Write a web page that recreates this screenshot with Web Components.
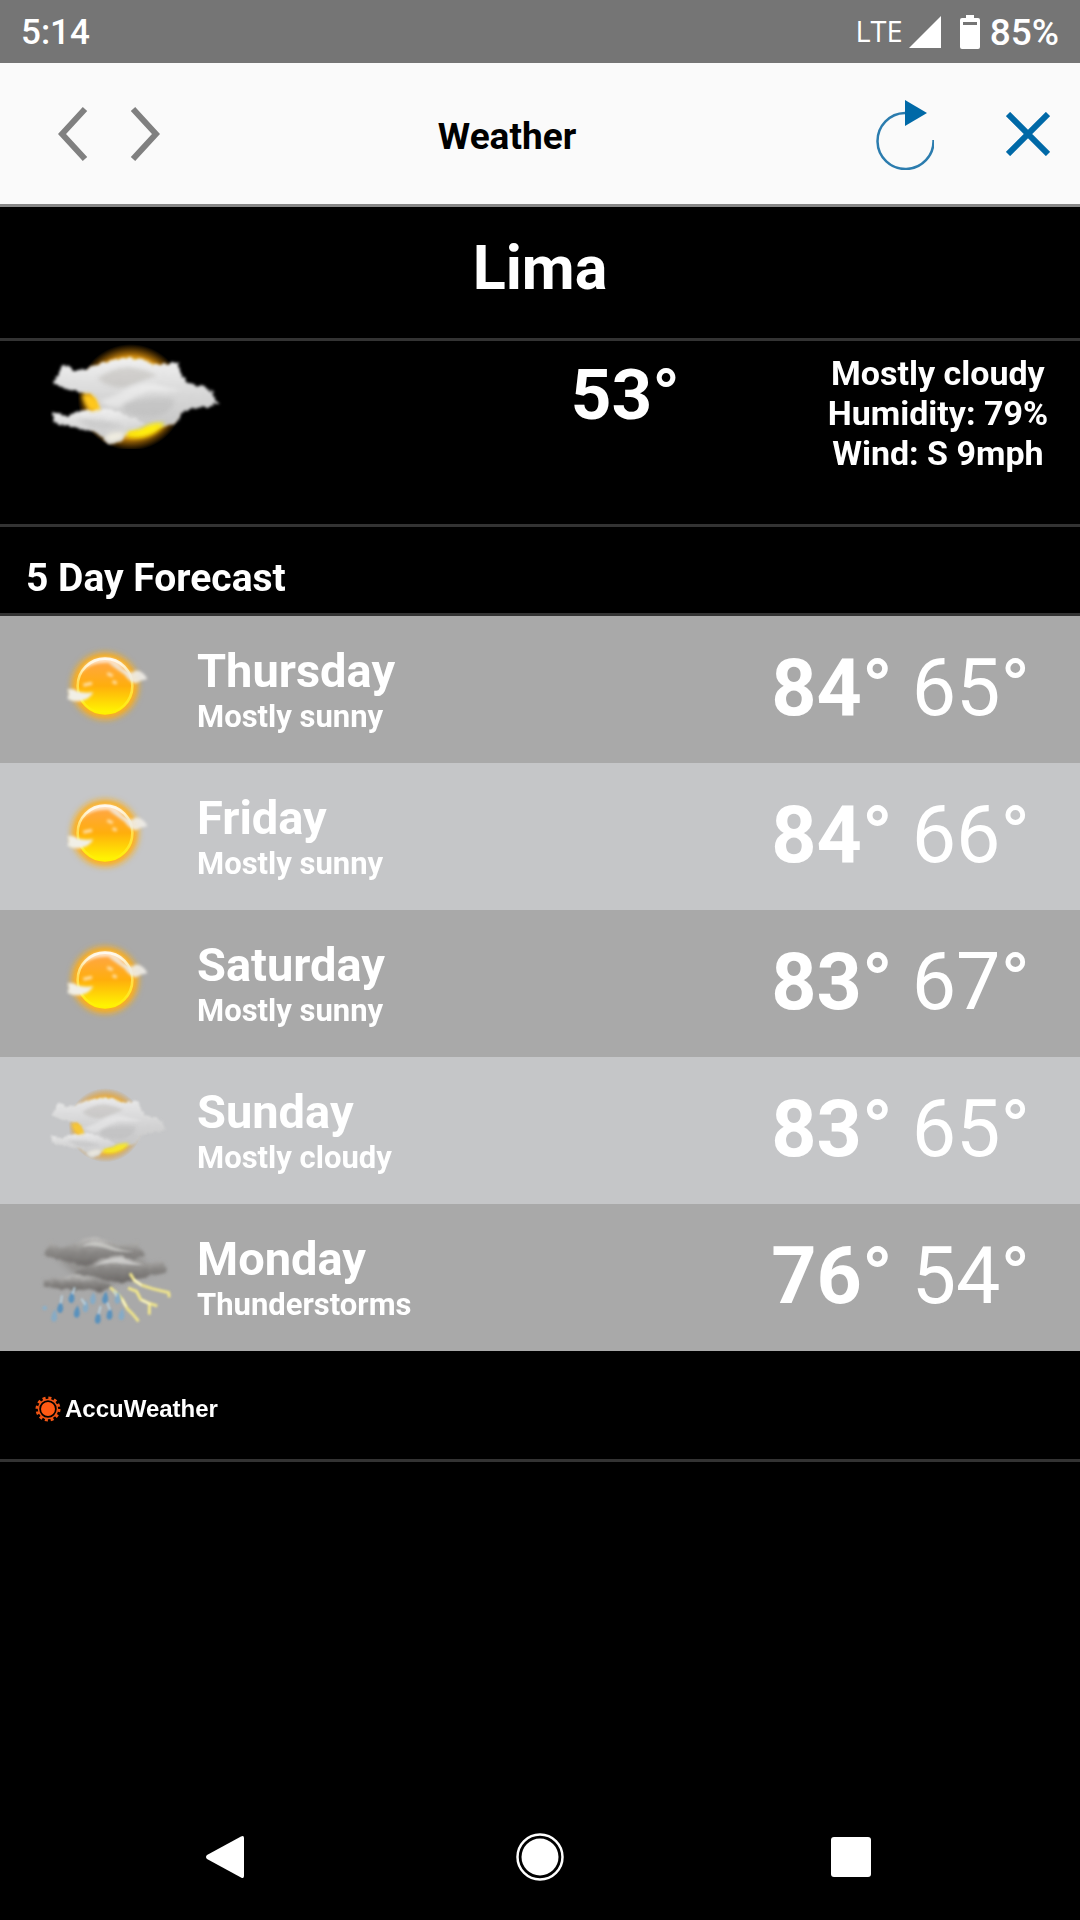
<!DOCTYPE html>
<html lang="en">
<head>
<meta charset="utf-8">
<meta name="viewport" content="width=device-width, initial-scale=1">
<title>Weather</title>
<style>
  body {
    margin: 0;
    background: #000;
    color: #fff;
    font-family: Roboto, "Liberation Sans", sans-serif;
  }
</style>
</head>
<body>
<weather-app></weather-app>

<script>
const drawings = {
  sunny: `
    <defs>
      <linearGradient id="disc" x1="0" y1="0" x2="0" y2="1">
        <stop offset="0" stop-color="#ffa54a"/>
        <stop offset=".5" stop-color="#ffae0c"/>
        <stop offset="1" stop-color="#fff800"/>
      </linearGradient>
      <linearGradient id="rim" x1="0" y1="0" x2="0" y2="1">
        <stop offset="0" stop-color="#fff3df"/>
        <stop offset=".45" stop-color="#ffdb55"/>
        <stop offset="1" stop-color="#fff200"/>
      </linearGradient>
      <filter id="glow" x="-30%" y="-30%" width="160%" height="160%"><feGaussianBlur stdDeviation="9"/></filter>
      <filter id="soft" x="-30%" y="-30%" width="160%" height="160%"><feGaussianBlur stdDeviation="4"/></filter>
    </defs>
    <circle cx="225" cy="168" r="100" fill="#ffae12" filter="url(#glow)"/>
    <circle cx="225" cy="168" r="82" fill="url(#disc)" stroke="url(#rim)" stroke-width="8"/>
    <g filter="url(#soft)">
      <path d="M150 134 C164 98 198 84 228 84 C252 84 280 98 296 124 C274 104 250 98 228 98 C192 98 166 110 150 134Z" fill="#fff" opacity=".7"/>
      <path d="M236 100 Q262 98 280 118 L306 128 Q318 118 330 124 Q346 132 352 148 Q334 150 318 160 Q298 156 284 134 Q264 120 236 100Z" fill="#f0ede8" opacity=".9"/>
      <path d="M232 130 l16 8 M248 154 l12 6 M160 166 l26 -6" stroke="#ffe0a8" stroke-width="9"/>
      <path d="M112 178 Q130 174 142 184 Q160 190 190 187 Q178 208 156 212 Q132 218 112 206 Q120 192 112 178Z" fill="#f1efe6"/>
    </g>`,

  cloudy: `
    <defs>
      <linearGradient id="cloud" x1="0" y1="0" x2="0" y2="1">
        <stop offset="0" stop-color="#f0f0f0"/>
        <stop offset=".55" stop-color="#d5d5d5"/>
        <stop offset="1" stop-color="#c4c4c4"/>
      </linearGradient>
      <radialGradient id="sun">
        <stop offset="0" stop-color="#fff200"/>
        <stop offset=".64" stop-color="#ffc400"/>
        <stop offset=".78" stop-color="#f0a010" stop-opacity=".8"/>
        <stop offset="1" stop-color="#d07c00" stop-opacity="0"/>
      </radialGradient>
      <filter id="wisp" x="-20%" y="-20%" width="140%" height="140%">
        <feTurbulence type="fractalNoise" baseFrequency=".06" numOctaves="3" seed="4"/>
        <feDisplacementMap in="SourceGraphic" scale="18" xChannelSelector="R" yChannelSelector="G"/>
        <feGaussianBlur stdDeviation="5"/>
      </filter>
      <filter id="soft" x="-30%" y="-30%" width="160%" height="160%"><feGaussianBlur stdDeviation="6"/></filter>
    </defs>
    <circle cx="392" cy="202" r="160" fill="url(#sun)"/>
    <g filter="url(#wisp)" fill="url(#cloud)">
      <path d="M160 158 Q174 140 180 118 Q194 98 212 116 Q232 130 258 116 Q292 102 320 96 Q350 82 384 84 Q430 86 462 104 Q492 108 518 94 Q536 90 540 124 Q552 148 566 160 Q596 168 626 174 Q640 194 654 220 Q632 234 604 232 Q562 240 540 252 Q538 280 506 288 Q452 292 420 306 L296 270 Q306 222 268 192 Q234 188 202 178 Q178 174 160 158Z"/>
      <path d="M160 250 Q176 246 198 256 Q226 248 258 242 Q306 228 352 246 Q396 258 438 282 Q408 304 378 314 Q372 334 328 344 Q306 324 292 310 Q246 300 214 290 Q186 286 160 278Z"/>
    </g>
    <g filter="url(#soft)">
      <path d="M300 214 Q350 196 392 172 Q430 154 472 164 Q520 178 552 184 Q500 186 452 184 Q404 196 356 232 Q330 236 300 214Z" fill="#fff" opacity=".4"/>
      <path d="M292 146 Q340 110 392 112 Q432 118 470 136 Q420 156 374 172 Q330 176 292 146Z" fill="#a9a39f" opacity=".35"/>
      <path d="M372 222 Q440 196 520 206 Q528 240 470 258 Q420 262 372 244Z" fill="#a9a9a9" opacity=".3"/>
      <path d="M224 268 Q300 262 366 288 Q330 300 270 290Z" fill="#aaa" opacity=".3"/>
      <path d="M246 196 Q262 186 280 200 Q298 216 298 238 L272 242 Q252 224 246 196Z" fill="#ffc81e"/>
      <path d="M382 306 Q418 302 442 286 Q466 276 494 280 Q478 304 446 316 Q410 328 378 318Z" fill="#ffee08"/>
      <path d="M310 322 Q340 300 374 308 Q376 330 330 338Z" fill="#efece0"/>
    </g>`,

  storm: `
    <defs>
      <linearGradient id="dark" x1="0" y1="0" x2="0" y2="1">
        <stop offset="0" stop-color="#c2c1bf"/>
        <stop offset=".45" stop-color="#8b8987"/>
        <stop offset="1" stop-color="#6a6765"/>
      </linearGradient>
      <filter id="wisp" x="-20%" y="-20%" width="140%" height="140%">
        <feTurbulence type="fractalNoise" baseFrequency=".06" numOctaves="2" seed="7"/>
        <feDisplacementMap in="SourceGraphic" scale="12" xChannelSelector="R" yChannelSelector="G"/>
        <feGaussianBlur stdDeviation="4"/>
      </filter>
      <filter id="haze" x="-30%" y="-30%" width="160%" height="160%"><feGaussianBlur stdDeviation="9"/></filter>
      <filter id="soft" x="-30%" y="-30%" width="160%" height="160%"><feGaussianBlur stdDeviation="3"/></filter>
      <path id="drop" d="M3 -20 Q14 4 6 14 Q0 20 -6 14 Q-14 4 3 -20Z"/>
    </defs>
    <path d="M110 140 L350 130 L400 190 L260 226 L170 200Z" fill="#85827f" opacity=".6" filter="url(#haze)"/>
    <g filter="url(#wisp)">
      <path d="M70 134 Q80 112 94 96 Q108 106 122 114 Q152 106 178 94 Q206 80 230 82 Q270 92 302 106 Q330 104 350 96 Q362 114 376 138 Q344 148 304 150 Q264 158 232 176 Q180 166 136 154 Q100 142 70 134Z" fill="url(#dark)"/>
      <path d="M160 190 Q204 170 238 150 Q270 138 302 138 Q336 150 376 160 Q404 162 422 150 Q436 160 442 188 Q414 194 382 198 Q344 216 300 218 Q258 210 218 198Z" fill="url(#dark)"/>
      <path d="M70 212 Q96 204 120 204 Q158 188 196 198 Q236 206 274 226 Q262 244 232 246 Q202 236 170 240 Q122 238 74 230Z" fill="url(#dark)"/>
    </g>
    <g filter="url(#soft)">
      <path d="M186 108 Q222 84 264 104 Q302 122 342 124 Q296 130 260 116 Q226 104 186 108Z" fill="#d9d8d6" opacity=".6"/>
      <path d="M224 166 Q266 142 306 144 Q340 158 370 164 Q320 166 288 158 Q258 158 224 166Z" fill="#e0dfdd" opacity=".6"/>
      <path d="M270 232 L292 252 L308 270 L322 296 L338 312 L356 334" fill="none" stroke="#efe48a" stroke-width="9"/>
      <path d="M330 190 L344 212 L366 226 L398 236 L446 248 L448 262 M324 234 L350 244 L362 268 L388 280 L412 288 M388 280 L388 314" fill="none" stroke="#f0e58c" stroke-width="9"/>
      <path d="M342 208 L364 226 M306 268 L318 290 M364 270 L390 282" fill="none" stroke="#fffbd2" stroke-width="5"/>
    </g>
    <g filter="url(#soft)" fill="#5a92bd">
      <use href="#drop" x="154" y="262"/>
      <use href="#drop" x="120" y="292"/>
      <use href="#drop" x="170" y="306"/>
      <use href="#drop" x="268" y="312"/>
      <use href="#drop" x="233" y="324"/>
      <use href="#drop" x="255" y="264"/>
      <g fill="#86abc6">
        <use href="#drop" x="218" y="266"/>
        <use href="#drop" x="292" y="264"/>
        <use href="#drop" x="102" y="318"/>
        <use href="#drop" x="304" y="314"/>
        <use href="#drop" x="196" y="290"/>
      </g>
      <circle cx="74" cy="294" r="7" fill="#8bb0c9"/>
      <path d="M164 232 L158 252 M126 256 L122 280 M184 266 L196 284 M242 288 L236 312 M262 278 L270 300 M282 242 L290 258" stroke="#b9d0de" stroke-width="6"/>
    </g>`
};

const viewBoxes = {
  sunny: "9 12 432 336",
  cloudy: "80 -14 620 482",
  storm: "39 36 432 336",
  cloudyLarge: "150 33 516 324"
};

class WeatherIcon extends HTMLElement {

    connectedCallback() {
        const shadow = this.attachShadow({ mode: "open" });
        const kind = this.getAttribute("kind");
        const box = this.hasAttribute("large") ? viewBoxes[kind + "Large"] : viewBoxes[kind];
        shadow.innerHTML = `
          <style>
            :host { display: block; width: 144px; height: 112px; }
            :host([kind="cloudy"]) { opacity: .85; }
            :host([large]) { width: 172px; height: 108px; opacity: 1; }
            svg { display: block; width: 100%; height: 100%; }
          </style>
          <svg viewBox="${box}" aria-hidden="true">${drawings[kind]}</svg>
        `;
    }

}

class StatusBar extends HTMLElement {

    connectedCallback() {
        const shadow = this.attachShadow({ mode: "open" });
        shadow.innerHTML = `
          <style>
            :host {
              display: flex;
              align-items: center;
              height: 63px;
              padding: 0 21px;
              background: #757575;
              font-weight: 500;
              line-height: 40px;
            }
            .time { flex: 1; padding-top: 2px; font-size: 35px; }
            .network {
              margin-right: 6px;
              padding-bottom: 2px;
              font-family: "Open Sans", "Noto Sans", sans-serif;
              font-size: 29px;
              font-weight: 400;
            }
            .signal { margin-right: 19px; }
            .battery { margin-right: 10px; }
            .level { padding-top: 2px; font-size: 37px; }
            svg { display: block; }
          </style>
          <span class="time">5:14</span>
          <span class="network">LTE</span>
          <svg class="signal" width="32" height="32" viewBox="0 0 32 32"><path d="M32 0V32H0Z" fill="#fff"/></svg>
          <svg class="battery" width="20" height="34" viewBox="0 0 20 34">
            <path d="M6 0h8v3h4a2 2 0 0 1 2 2v27a2 2 0 0 1-2 2H2a2 2 0 0 1-2-2V5a2 2 0 0 1 2-2h4Z" fill="#fff"/>
            <path d="M3 7h14v3H3Z" fill="#757575"/>
          </svg>
          <span class="level">85%</span>
        `;
    }

}

class BrowserBar extends HTMLElement {

    connectedCallback() {
        const shadow = this.attachShadow({ mode: "open" });
        shadow.innerHTML = `
          <style>
            :host {
              display: flex;
              align-items: center;
              height: 141px;
              background: #fafafa;
              border-bottom: 3px solid #888;
              color: #000;
            }
            .history { display: flex; gap: 42px; padding-left: 58px; }
            .actions { display: flex; gap: 20px; }
            button {
              display: flex;
              align-items: center;
              justify-content: center;
              width: 104px;
              height: 104px;
              padding: 0;
              border: 0;
              background: none;
            }
            .history button { width: 30px; }
            .title {
              flex: 1;
              padding: 6px 0 0 2px;
              text-align: center;
              font-size: 37px;
              font-weight: 700;
              line-height: 40px;
            }
            svg { display: block; fill: none; }
          </style>
          <div class="history">
            <button aria-label="Back"><svg width="30" height="56" viewBox="0 0 30 56" stroke="#808080" stroke-width="6"><path d="M27 3L4 28L27 53"/></svg></button>
            <button aria-label="Forward"><svg width="30" height="56" viewBox="0 0 30 56" stroke="#808080" stroke-width="6"><path d="M3 3L26 28L3 53"/></svg></button>
          </div>
          <div class="title"><slot></slot></div>
          <div class="actions">
            <button aria-label="Reload">
              <svg width="60" height="72" viewBox="0 0 60 72">
                <path d="M59.500 42A28 28 0 1 1 31 15" stroke="#2b7cae" stroke-width="2.500"/>
                <path d="M31 2L53 15L31 28Z" fill="#0069a7"/>
              </svg>
            </button>
            <button aria-label="Close"><svg width="44" height="44" viewBox="0 0 44 44" stroke="#0069a7" stroke-width="6"><path d="M2 2L42 42M42 2L2 42"/></svg></button>
          </div>
        `;
    }

}

class CurrentWeather extends HTMLElement {

    connectedCallback() {
        const shadow = this.attachShadow({ mode: "open" });
        shadow.innerHTML = `
          <style>
            :host { display: block; font-weight: 700; }
            h1 {
              margin: 0;
              padding: 25px 0 34px;
              border-bottom: 3px solid #333;
              font-size: 61px;
              line-height: 72px;
              text-align: center;
            }
            .now {
              display: grid;
              grid-template-columns: 8fr 6fr 5fr;
              min-height: 183px;
              border-bottom: 3px solid #333;
              text-align: center;
            }
            weather-icon { margin-left: 50px; }
            .degrees { padding-top: 12px; font-size: 71px; line-height: 84px; }
            .details { padding-top: 12px; font-size: 34px; line-height: 40px; }
          </style>
          <h1>${this.getAttribute("city")}</h1>
          <div class="now">
            <weather-icon kind="${this.getAttribute("icon")}" large></weather-icon>
            <div class="degrees">${this.getAttribute("degrees")}</div>
            <div class="details"><slot></slot></div>
          </div>
        `;
    }

}

class ForecastDay extends HTMLElement {

    connectedCallback() {
        const shadow = this.attachShadow({ mode: "open" });
        shadow.innerHTML = `
          <style>
            :host {
              display: flex;
              align-items: center;
              height: 147px;
              padding: 0 50px 0 33px;
              background: #a9a9a9;
            }
            :host(:nth-of-type(even)) { background: #c5c6c8; }
            .day { flex: 1; padding-left: 20px; font-weight: 700; }
            .name { font-size: 47px; line-height: 54px; }
            .sky { font-size: 31px; line-height: 38px; }
            .range { display: flex; gap: 19px; padding-bottom: 3px; font-size: 79px; line-height: 92px; }
            .high { font-weight: 700; }
          </style>
          <weather-icon kind="${this.getAttribute("icon")}"></weather-icon>
          <div class="day">
            <div class="name">${this.getAttribute("day")}</div>
            <div class="sky"><slot></slot></div>
          </div>
          <div class="range">
            <span class="high">${this.getAttribute("high")}</span>
            <span>${this.getAttribute("low")}</span>
          </div>
        `;
    }

}

class ForecastList extends HTMLElement {

    connectedCallback() {
        const shadow = this.attachShadow({ mode: "open" });
        shadow.innerHTML = `
          <style>
            :host { display: block; }
            h2 {
              margin: 0;
              padding: 27px 26px 11px;
              border-bottom: 3px solid #333;
              font-size: 39px;
              font-weight: 700;
              line-height: 48px;
            }
          </style>
          <h2>${this.getAttribute("heading")}</h2>
          <slot></slot>
        `;
    }

}

class ProviderCredit extends HTMLElement {

    connectedCallback() {
        const shadow = this.attachShadow({ mode: "open" });
        shadow.innerHTML = `
          <style>
            :host {
              display: block;
              padding: 44px 35px 36px;
              border-bottom: 3px solid #333;
            }
            a {
              display: inline-flex;
              align-items: center;
              gap: 4px;
              color: #fff;
              font: 700 24px/28px "Liberation Sans", Arial, sans-serif;
              text-decoration: none;
              vertical-align: top;
            }
            svg { display: block; }
          </style>
          <a href="#">
            <svg width="26" height="26" viewBox="-13 -13 26 26" aria-hidden="true">
              <circle r="11" fill="none" stroke="#f05514" stroke-width="3" stroke-dasharray="3 2.760"/>
              <circle r="9.500" fill="none" stroke="#f05514" stroke-width="1.500"/>
              <circle r="7" fill="#ff5a14"/>
            </svg>
            <slot></slot>
          </a>
        `;
    }

}

class SystemNav extends HTMLElement {

    connectedCallback() {
        const shadow = this.attachShadow({ mode: "open" });
        shadow.innerHTML = `
          <style>
            :host {
              display: grid;
              grid-template-columns: repeat(3, 1fr);
              justify-items: center;
              align-items: center;
              height: 126px;
              padding: 0 68px;
            }
            button { padding: 0; border: 0; background: none; }
            svg { display: block; fill: #fff; }
          </style>
          <button aria-label="Back"><svg width="48" height="48" viewBox="0 0 48 48"><path d="M6 22L40 3.500Q43 2 43 5V43Q43 46 40 44.500L6 26Q4 24 6 22Z"/></svg></button>
          <button aria-label="Home"><svg width="48" height="48" viewBox="0 0 48 48"><circle cx="24" cy="24" r="22.500" fill="none" stroke="#fff" stroke-width="2.500"/><circle cx="24" cy="24" r="18.500"/></svg></button>
          <button aria-label="Recent apps"><svg width="48" height="48" viewBox="0 0 48 48"><rect y="4" width="40" height="40" rx="3"/></svg></button>
        `;
    }

}

class WeatherApp extends HTMLElement {

    connectedCallback() {
        const shadow = this.attachShadow({ mode: "open" });
        shadow.innerHTML = `
          <style>
            :host { display: flex; flex-direction: column; min-height: 100vh; }
            main { flex: 1; }
            current-weather span { display: block; }
          </style>
          <status-bar></status-bar>
          <browser-bar>Weather</browser-bar>
          <main>
            <current-weather city="Lima" icon="cloudy" degrees="53°">
              <span>Mostly cloudy</span>
              <span>Humidity: 79%</span>
              <span>Wind: S 9mph</span>
            </current-weather>
            <forecast-list heading="5 Day Forecast">
              <forecast-day day="Thursday" icon="sunny" high="84°" low="65°">Mostly sunny</forecast-day>
              <forecast-day day="Friday" icon="sunny" high="84°" low="66°">Mostly sunny</forecast-day>
              <forecast-day day="Saturday" icon="sunny" high="83°" low="67°">Mostly sunny</forecast-day>
              <forecast-day day="Sunday" icon="cloudy" high="83°" low="65°">Mostly cloudy</forecast-day>
              <forecast-day day="Monday" icon="storm" high="76°" low="54°">Thunderstorms</forecast-day>
            </forecast-list>
            <provider-credit>AccuWeather</provider-credit>
          </main>
          <system-nav></system-nav>
        `;
    }

}

customElements.define("weather-icon", WeatherIcon);
customElements.define("status-bar", StatusBar);
customElements.define("browser-bar", BrowserBar);
customElements.define("current-weather", CurrentWeather);
customElements.define("forecast-day", ForecastDay);
customElements.define("forecast-list", ForecastList);
customElements.define("provider-credit", ProviderCredit);
customElements.define("system-nav", SystemNav);
customElements.define("weather-app", WeatherApp);
</script>
</body>
</html>
